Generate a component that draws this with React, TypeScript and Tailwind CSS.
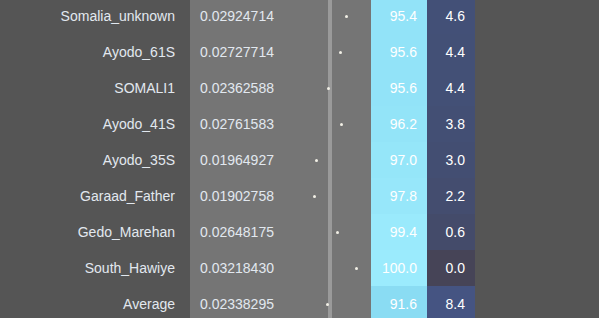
import React from "react";

type Row = { name: string; v: number; a: string; b: string };

const rows: Row[] = [
  { name: "Somalia_unknown", v: 0.02924714, a: "95.4", b: "4.6" },
  { name: "Ayodo_61S", v: 0.02727714, a: "95.6", b: "4.4" },
  { name: "SOMALI1", v: 0.02362588, a: "95.6", b: "4.4" },
  { name: "Ayodo_41S", v: 0.02761583, a: "96.2", b: "3.8" },
  { name: "Ayodo_35S", v: 0.01964927, a: "97.0", b: "3.0" },
  { name: "Garaad_Father", v: 0.01902758, a: "97.8", b: "2.2" },
  { name: "Gedo_Marehan", v: 0.02648175, a: "99.4", b: "0.6" },
  { name: "South_Hawiye", v: 0.0321843, a: "100.0", b: "0.0" },
  { name: "Average", v: 0.02338295, a: "91.6", b: "8.4" },
];

function mix(c0: number[], c1: number[], t: number) {
  const c = c0.map((x, i) => Math.round(x + (c1[i] - x) * t));
  return `rgb(${c[0]},${c[1]},${c[2]})`;
}

export default function App() {
  return (
    <div
      className="w-[599px] h-[318px] overflow-hidden bg-[#555555] text-[14px]"
      style={{ fontFamily: '"Liberation Sans", Arial, sans-serif' }}
    >
      <div className="-mt-[2px] flex flex-col">
        {rows.map((r) => {
          const a = parseFloat(r.a);
          const b = parseFloat(r.b);
          const ta = (a - 91.6) / (100 - 91.6);
          const cyan = mix([0x8a, 0xdc, 0xf3], [0x9b, 0xeb, 0xfd], ta);
          const navy = mix([0x46, 0x44, 0x57], [0x45, 0x54, 0x82], Math.min(1, b / 8.4));
          const navy2 = b > 0 && b < 8 ? mix([0x44, 0x4a, 0x68], [0x43, 0x51, 0x78], b / 5) : navy;
          const dotX = 253.3 + r.v * 3192 - 190;
          return (
            <div key={r.name} className="flex h-[36px] items-center">
              <div className="w-[190px] h-full flex items-center justify-end pr-[15px] text-[#e2e8ef]">
                {r.name}
              </div>
              <div className="relative w-[181px] h-full bg-[#757575] flex items-center pl-[10px] text-[#e2e8ef]">
                {r.v.toFixed(8)}
                <div className="absolute left-[138px] top-0 w-[4px] h-full bg-[#9a9a9a]" />
                <div
                  className="absolute top-1/2 -mt-[1px] w-[3px] h-[3px] rounded-full bg-[#f2f0e6]"
                  style={{ left: `${dotX - 1.5}px` }}
                />
              </div>
              <div
                className="w-[56px] h-full flex items-center justify-end pr-[10px] text-white"
                style={{ backgroundColor: cyan }}
              >
                {r.a}
              </div>
              <div
                className="w-[48px] h-full flex items-center justify-end pr-[10px] text-white"
                style={{ backgroundColor: navy2 }}
              >
                {r.b}
              </div>
            </div>
          );
        })}
      </div>
    </div>
  );
}
